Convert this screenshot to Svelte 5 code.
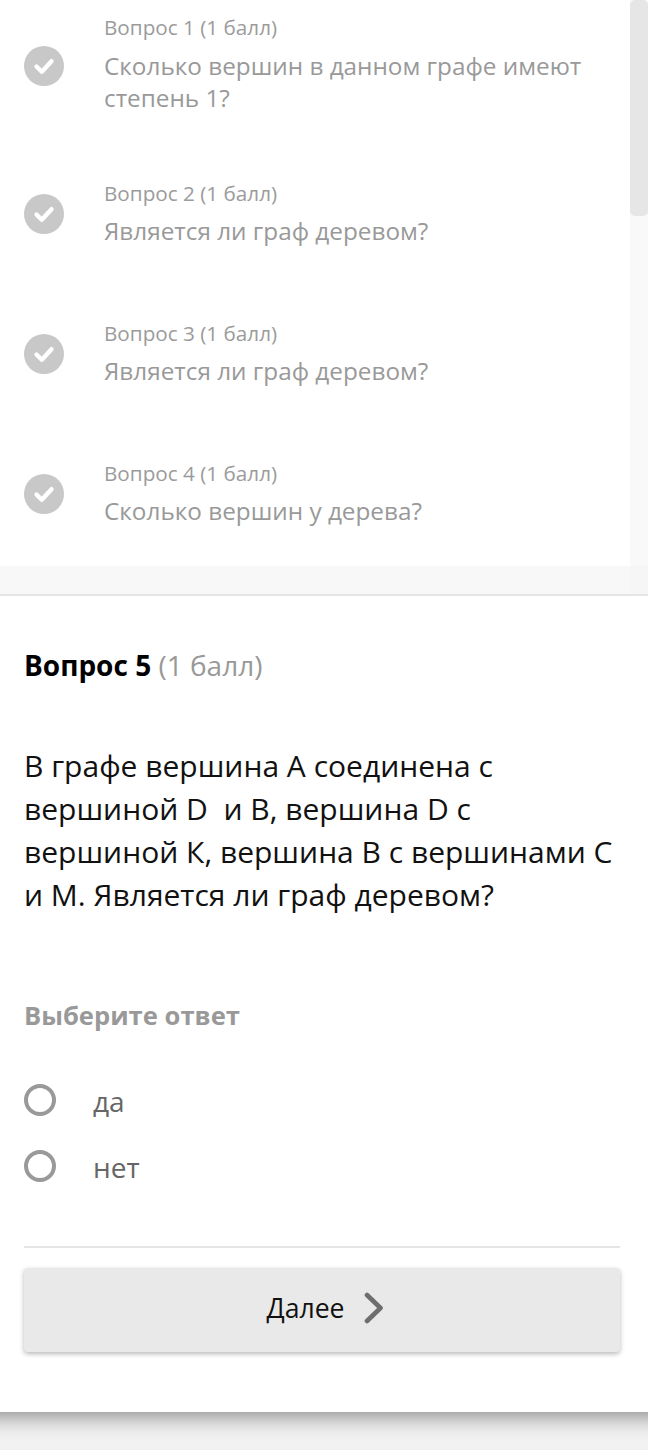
<script>
  const done = [
    { n: 1, q: 'Сколько вершин в данном графе имеют степень 1?' },
    { n: 2, q: 'Является ли граф деревом?' },
    { n: 3, q: 'Является ли граф деревом?' },
    { n: 4, q: 'Сколько вершин у дерева?' }
  ];
  const options = ['да', 'нет'];
</script>

<div class="page">
  <main class="card">
    <section class="top">
      <div class="list">
        {#each done as item}
          <div class="item">
            <span class="tick">
              <svg viewBox="0 0 40 40" width="40" height="40" aria-hidden="true">
                <circle cx="20" cy="20" r="20" fill="#c8c8c8" />
                <path d="M12.5 20.5 L17.8 25.8 L27.5 15.2" fill="none" stroke="#fff" stroke-width="4.4" stroke-linecap="round" stroke-linejoin="round" />
              </svg>
            </span>
            <div class="item-text">
              <div class="label">Вопрос {item.n} (1 балл)</div>
              <div class="question">{item.q}</div>
            </div>
          </div>
        {/each}
      </div>
      <div class="track"><div class="thumb"></div></div>
    </section>
    <div class="band"><div class="band-track"></div></div>

    <section class="main">
      <h2 class="title"><b>Вопрос 5</b> <span>(1 балл)</span></h2>
      <p class="body">В графе вершина А соединена с вершиной D&nbsp; и В, вершина D с вершиной К, вершина В с вершинами С и М. Является ли граф деревом?</p>
      <div class="choose">Выберите ответ</div>
      <div class="options">
        {#each options as o}
          <div class="option">
            <span class="radio"></span>
            <span class="opt-text">{o}</span>
          </div>
        {/each}
      </div>
      <div class="rule"></div>
      <button class="next">
        <span>Далее</span>
        <svg viewBox="0 0 20 32" width="20" height="32" aria-hidden="true">
          <path d="M3 3 L16.5 16 L3 29" fill="none" stroke="#6e6e6e" stroke-width="4.6" stroke-linecap="round" stroke-linejoin="round" />
        </svg>
      </button>
    </section>
  </main>
</div>

<style>
  :global(body) {
    margin: 0;
    background: #f2f2f2;
    font-family: "Open Sans", "Noto Sans", sans-serif;
  }
  .page {
    width: 648px;
    height: 1450px;
    overflow: hidden;
  }
  .card {
    background: #fff;
    height: 1412px;
    margin: 0 -40px;
    padding: 0 40px;
    box-shadow: 0 5px 20px rgba(0, 0, 0, 0.42);
  }
  .top {
    display: flex;
    height: 566px;
    overflow: hidden;
  }
  .list {
    flex: 1;
    padding: 13px 24px 0;
    display: flex;
    flex-direction: column;
    gap: 72px;
  }
  .item {
    display: flex;
    align-items: center;
    gap: 40px;
  }
  .item:first-child {
    margin-bottom: -7px;
  }
  .tick {
    display: flex;
    flex: none;
    width: 40px;
    height: 40px;
    margin-top: 2px;
  }
  .item:first-child .tick {
    margin-top: 5px;
  }
  .item-text {
    display: flex;
    flex-direction: column;
    gap: 8px;
  }
  .item:first-child .item-text {
    gap: 9px;
  }
  .label {
    font-size: 20.7px;
    line-height: 28px;
    color: #9b9b9b;
  }
  .question {
    font-size: 24.3px;
    line-height: 32px;
    color: #999;
  }
  .track {
    width: 18px;
    flex: none;
    background: #f9f9f9;
  }
  .thumb {
    height: 216px;
    background: #e6e6e6;
    border-radius: 5px;
  }
  .band {
    display: flex;
    justify-content: flex-end;
    height: 28px;
    margin: 0 -40px;
    padding: 0 40px;
    background: #f8f8f8;
    border-bottom: 2px solid #e5e5e5;
  }
  .band-track {
    width: 18px;
    background: #f6f6f6;
  }
  .main {
    padding: 0 28px 0 24px;
  }
  .title {
    margin: 0;
    padding-top: 49px;
    font-size: 28px;
    line-height: 40px;
    font-weight: 400;
    color: #000;
  }
  .title b {
    font-weight: 700;
  }
  .title span {
    color: #999;
  }
  .body {
    margin: 0;
    padding-top: 59px;
    font-size: 30px;
    line-height: 43px;
    color: #111;
  }
  .choose {
    padding-top: 82px;
    font-size: 25.6px;
    line-height: 36px;
    font-weight: 700;
    color: #999;
  }
  .options {
    display: flex;
    flex-direction: column;
    gap: 34px;
    padding-top: 50px;
  }
  .option {
    display: flex;
    align-items: center;
    height: 32px;
    gap: 37px;
  }
  .radio {
    flex: none;
    width: 32px;
    height: 32px;
    box-sizing: border-box;
    border: 4.5px solid #999;
    border-radius: 50%;
  }
  .opt-text {
    font-size: 28px;
    line-height: 36px;
    color: #666;
    position: relative;
    top: 1px;
  }
  .rule {
    height: 2px;
    background: #e5e5e5;
    margin-top: 64px;
  }
  .next {
    display: flex;
    align-items: center;
    justify-content: center;
    gap: 19px;
    width: 100%;
    height: 84px;
    margin-top: 20px;
    border: 0;
    border-radius: 4px;
    background: #e9e9e9;
    box-shadow: 0 2px 5px rgba(0, 0, 0, 0.28);
    font-family: inherit;
    font-size: 26.6px;
    color: #111;
    padding: 0 0 4px 6px;
  }
</style>
